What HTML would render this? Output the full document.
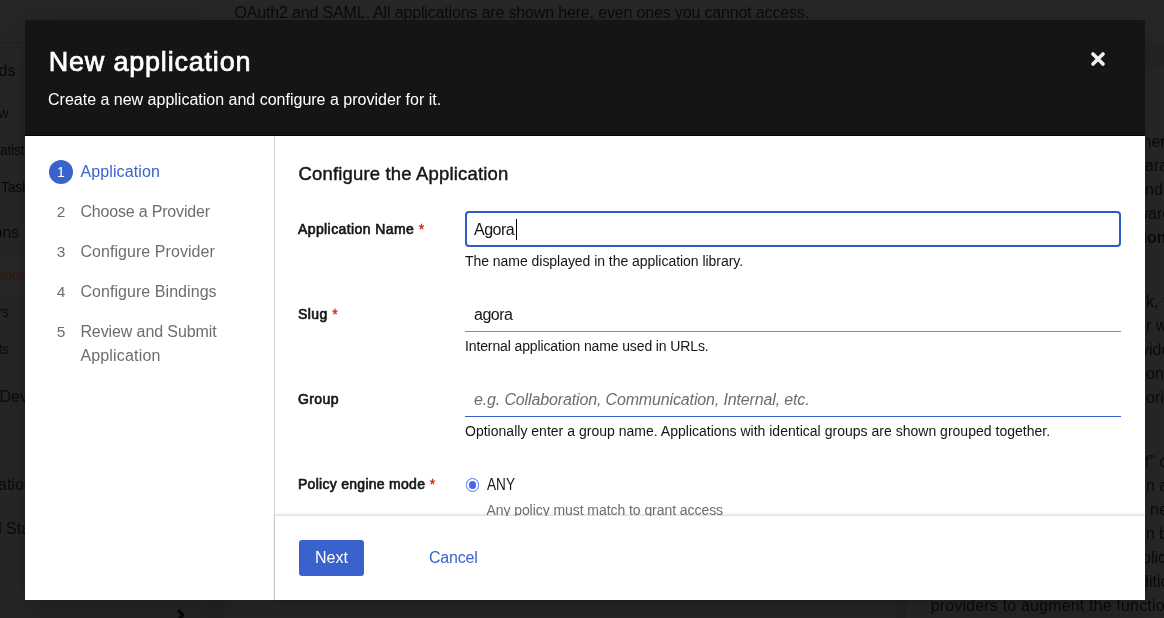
<!DOCTYPE html>
<html lang="en">
<head>
<meta charset="utf-8">
<title>New application</title>
<style>
*{box-sizing:border-box;margin:0;padding:0}
html,body{width:1164px;height:618px;overflow:hidden}
body{position:relative;background:#262626;font-family:"Liberation Sans",sans-serif;font-size:16px;color:#151515}
.modal,.page{will-change:transform}
/* ---------- dimmed page behind the backdrop ---------- */
.page{position:absolute;left:0;top:0;width:1164px;height:618px;overflow:hidden;background:#242424;color:#0a0a0a}
.page .brand{position:absolute;left:0;top:0;width:202px;height:42px;background:#262626}
.page .sidebar{position:absolute;left:0;top:42px;width:202px;height:576px;background:#262626;border-top:1px solid #202020}
.page .pagehead{position:absolute;left:202px;top:0;width:962px;height:43px;background:#272727;border-bottom:1px solid #222}
.page .content{position:absolute;left:225px;top:66px;width:670px;height:552px;background:#272727}
.page .about{position:absolute;left:906px;top:66px;width:258px;height:552px;background:#272727}
.page .sb{position:absolute;white-space:pre;color:#0a0a0a;font-size:16px;line-height:24px}
.page .sb.sub{font-size:14px;line-height:21px;letter-spacing:-.3px}
.page .sb.cur{color:#351510}
.page .curband{position:absolute;left:0;top:258px;width:202px;height:36px;background:#282828}
.page .sb .pre,.page .ln .pre{position:absolute;right:100%;top:0}
.page .chev{position:absolute;left:175.3px;top:607.8px}
.page .bgtext{position:absolute;white-space:nowrap;color:#0a0a0a;font-size:16px;line-height:24px;letter-spacing:-.16px}
.page .ln{position:absolute;white-space:pre;color:#0a0a0a;font-size:16px;line-height:24px}
.page .ln b{font-weight:700}
/* ---------- modal ---------- */
.modal{position:absolute;left:25px;top:20px;width:1120px;height:580px;background:#fff;box-shadow:0 16px 32px 0 rgba(3,3,3,.16),0 0 8px 0 rgba(3,3,3,.1)}
.modal-header{position:absolute;left:0;top:0;width:1120px;height:116px;background:#151515;color:#fff;border-bottom:1px solid #050505}
.modal-header h1{position:absolute;left:23.7px;top:24px;font-size:27px;line-height:36px;font-weight:400;-webkit-text-stroke:.7px #fff;letter-spacing:.8px;white-space:nowrap}
.modal-header p{position:absolute;left:23px;top:68px;font-size:16px;line-height:24px;white-space:nowrap}
.close{position:absolute;left:1057.5px;top:23.9px;width:30px;height:30px;background:none;border:0}
.close svg{display:block}
.wizard-nav{position:absolute;left:0;top:116px;width:250px;height:464px;border-right:1px solid #d2d2d2;background:#fff}
.wizard-nav ol{list-style:none}
.wizard-nav li{position:absolute;left:24px;height:24px;line-height:24px;font-size:16px;color:#6a6e73;white-space:nowrap}
.wizard-nav li .num{position:absolute;left:0;top:0;width:24px;height:24px;border-radius:50%;text-align:center;font-size:15.5px;line-height:24px;color:#6a6e73}
.wizard-nav li .lbl{position:absolute;left:31.4px;top:0}
.wizard-nav li.current{color:#3a62cc}
.wizard-nav li.current .num{background:#3a62cc;color:#fff;font-size:14px}
.wizard-main{position:absolute;left:250px;top:116px;width:870px;height:380px;overflow:hidden;background:#fff}
.wizard-main h2{position:absolute;left:23.5px;top:24px;font-size:18.5px;line-height:27px;font-weight:400;letter-spacing:.17px;-webkit-text-stroke:.42px #151515;white-space:nowrap;color:#151515}
.form-label{position:absolute;left:23px;font-size:14px;line-height:21px;font-weight:400;-webkit-text-stroke:.65px #151515;letter-spacing:.4px;white-space:nowrap;color:#151515}
.form-label .req{color:#c9190b;-webkit-text-stroke:.3px #c9190b;margin-left:4.6px}
.control{position:absolute;left:190px;width:656px;height:36px;font-size:16px;line-height:24px;padding:7px 9px 3px;border:0;border-bottom:1px solid #8a8d90;background:#fff;color:#151515;white-space:nowrap}
.control.focus{border:2px solid #2f5bc8;border-radius:4px;padding:5px 7px 1px}
.control.accent{border-bottom:1px solid #3a62cc}
.control .ph{font-style:italic;color:#6a6e73;letter-spacing:-.14px}
.caret{display:inline-block;width:1px;height:21px;background:#000;vertical-align:-5px;margin-left:1.5px}
.help{position:absolute;left:190px;font-size:14px;line-height:21px;white-space:nowrap;color:#151515}
.radio{position:absolute;left:190.85px;top:342.2px;width:13.4px;height:13.4px;border-radius:50%;border:1.4px solid #4a70f4;background:#fff}
.radio::after{content:"";position:absolute;left:50%;top:50%;width:7.6px;height:7.6px;margin:-3.8px 0 0 -3.8px;border-radius:50%;background:#4068f2}
.radio-label{position:absolute;left:211.6px;top:337px;font-size:16px;line-height:24px;white-space:nowrap;transform:scaleX(.85);transform-origin:0 50%}
.radio-desc{position:absolute;left:211.4px;top:364px;font-size:14px;line-height:21px;color:#6a6e73;white-space:nowrap;letter-spacing:-.06px}
.wizard-footer{position:absolute;left:250px;top:496px;width:870px;height:84px;background:#fff;box-shadow:0 -1px 3px rgba(3,3,3,.18)}
.btn{position:absolute;top:24px;height:36px;line-height:24px;font-size:16px;padding:6px 16px;border:0;border-radius:3px;font-family:inherit;white-space:nowrap}
.btn.primary{left:24px;width:65px;background:#3a62cc;color:#fff}
.btn.link{left:138px;background:none;color:#3a62cc;letter-spacing:-.2px}
</style>
</head>
<body>
<div class="page">
  <div class="brand"></div>
  <aside class="sidebar"></aside>
  <div class="pagehead"></div>
  <section class="content"></section>
  <aside class="about"></aside>
  <div class="bgtext" style="left:234.4px;top:1px">OAuth2 and SAML. All applications are shown here, even ones you cannot access.</div>
  <nav class="sidenav">
    <div class="curband"></div>
    <div class="sb" style="left:-1.4px;top:58.6px"><span class="pre">Dashboar</span>ds</div>
    <div class="sb sub" style="left:-1.6px;top:102.5px"><span class="pre">Overvie</span>w</div>
    <div class="sb sub" style="left:0px;top:139.6px"><span class="pre">User St</span>atistics</div>
    <div class="sb sub" style="left:1px;top:176.7px"><span class="pre">System </span>Tasks</div>
    <div class="sb" style="left:-6.5px;top:221.2px"><span class="pre">Applicati</span>ons</div>
    <div class="sb sub cur" style="left:-1.6px;top:265.4px"><span class="pre">Applica</span>tions</div>
    <div class="sb sub" style="left:-2.3px;top:302.2px"><span class="pre">Provide</span>rs</div>
    <div class="sb sub" style="left:-1.5px;top:339.2px"><span class="pre">Outpos</span>ts</div>
    <div class="sb" style="left:-0.5px;top:385.0px"><span class="pre">Endpoint </span>Devices</div>
    <div class="sb" style="left:-30px;top:428.7px"><span class="pre">Events</span></div>
    <div class="sb" style="left:-2px;top:472.5px"><span class="pre">Customis</span>ation</div>
    <div class="sb" style="left:-7.3px;top:516.5px"><span class="pre">Flows an</span>d Stages</div>
    <div class="sb" style="left:-30px;top:560.5px"><span class="pre">Directory</span></div>
    <div class="sb" style="left:-30px;top:604.5px"><span class="pre">System</span></div>
    <svg class="chev" width="12" height="14" viewBox="0 0 12 14"><path d="M3 2 L8 7 L3 12" stroke="#060606" stroke-width="3" stroke-linejoin="round" fill="none"/></svg>
  </nav>
  <div class="aboutbody">
    <div class="ln" style="left:1142.5px;top:130.4px"><span class="pre">Applications in authentik are the ot</span>her</div>
    <div class="ln" style="left:1145.0px;top:154.4px"><span class="pre">used to configure and sep</span>arate the</div>
    <div class="ln" style="left:1145.0px;top:178.4px"><span class="pre">authorization/access control a</span>nd the</div>
    <div class="ln" style="left:1148px;top:202.4px"><span class="pre">appearance of a specific softw</span>are</div>
    <div class="ln" style="left:1147.0px;top:226.4px"><span class="pre">application in the <b>My applicati</b></span><b>ons</b></div>
    <div class="ln" style="left:1146px;top:290.1px"><span class="pre">When a user logs into authenti</span>k, they</div>
    <div class="ln" style="left:1146px;top:314.1px"><span class="pre">see a list of the applications fo</span>r which</div>
    <div class="ln" style="left:1149.0px;top:338.1px"><span class="pre">authentik is configured to prov</span>ide</div>
    <div class="ln" style="left:1146px;top:362.1px"><span class="pre">authentication and authorizati</span>on (the</div>
    <div class="ln" style="left:1146px;top:386.1px"><span class="pre">applications that they are auth</span>orised to use).</div>
    <div class="ln" style="left:1145px;top:449.7px"><span class="pre">Applications are the "other hal</span>f" of</div>
    <div class="ln" style="left:1146px;top:473.7px"><span class="pre">providers. They typically exist i</span>n a 1-to-1</div>
    <div class="ln" style="left:1150px;top:497.7px"><span class="pre">relationship; each application </span>needs a</div>
    <div class="ln" style="left:1146px;top:521.7px"><span class="pre">provider, and every provider ca</span>n be used</div>
    <div class="ln" style="left:1151.0px;top:545.7px"><span class="pre">with one application. App</span>lications can,</div>
    <div class="ln" style="left:1149.0px;top:569.7px"><span class="pre">however, use specific, add</span>itional</div>
    <div class="ln" style="letter-spacing:.17px;left:930.7px;top:594.4px">providers to augment the functionality of the main provider.</div>
  </div>
</div>

<div class="modal" role="dialog" aria-modal="true">
  <header class="modal-header">
    <h1>New application</h1>
    <p>Create a new application and configure a provider for it.</p>
    <button class="close" aria-label="Close">
      <svg width="30" height="30" viewBox="0 0 30 30"><path d="M10 10 L20 20 M20 10 L10 20" stroke="#f0f0f0" stroke-width="3.7" stroke-linecap="round" fill="none"/></svg>
    </button>
  </header>

  <nav class="wizard-nav">
    <ol>
      <li class="current" style="top:24px"><span class="num">1</span><span class="lbl" style="letter-spacing:.13px">Application</span></li>
      <li style="top:64px"><span class="num">2</span><span class="lbl" style="letter-spacing:-.18px">Choose a Provider</span></li>
      <li style="top:104px"><span class="num">3</span><span class="lbl" style="letter-spacing:.06px">Configure Provider</span></li>
      <li style="top:144px"><span class="num">4</span><span class="lbl" style="letter-spacing:.06px">Configure Bindings</span></li>
      <li style="top:184px"><span class="num">5</span><span class="lbl" style="letter-spacing:-.1px">Review and Submit<br><span style="letter-spacing:.17px">Application</span></span></li>
    </ol>
  </nav>

  <main class="wizard-main">
    <h2>Configure the Application</h2>
    <form>
      <label class="form-label" style="top:83px">Application Name<span class="req">*</span></label>
      <div class="control focus" style="top:75px;letter-spacing:-.5px">Agora<span class="caret"></span></div>
      <p class="help" style="top:115px;letter-spacing:-.04px">The name displayed in the application library.</p>

      <label class="form-label" style="top:168px">Slug<span class="req">*</span></label>
      <div class="control" style="top:160px;letter-spacing:-.5px">agora</div>
      <p class="help" style="top:200px;letter-spacing:-.12px">Internal application name used in URLs.</p>

      <label class="form-label" style="top:253px">Group</label>
      <div class="control accent" style="top:245px"><span class="ph">e.g. Collaboration, Communication, Internal, etc.</span></div>
      <p class="help" style="top:285px;letter-spacing:.015px">Optionally enter a group name. Applications with identical groups are shown grouped together.</p>

      <label class="form-label" style="top:338px;letter-spacing:.28px">Policy engine mode<span class="req">*</span></label>
      <span class="radio"></span>
      <span class="radio-label">ANY</span>
      <span class="radio-desc">Any policy must match to grant access</span>
    </form>
  </main>

  <footer class="wizard-footer">
    <button class="btn primary">Next</button>
    <button class="btn link">Cancel</button>
  </footer>
</div>
</body>
</html>
